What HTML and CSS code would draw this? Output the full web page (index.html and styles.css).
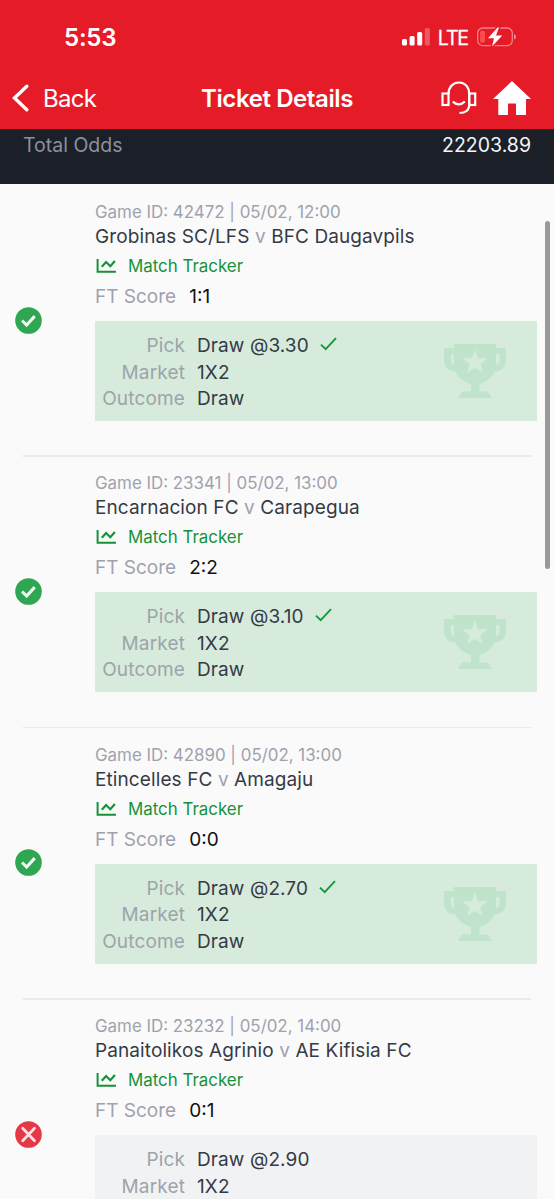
FILE: index.html
```
<!DOCTYPE html>
<html lang="en">
<head>
<meta charset="utf-8">
<title>Ticket Details</title>
<link rel="stylesheet" href="styles.css">
</head>
<body>
<svg class="sprite" width="0" height="0" aria-hidden="true">
  <symbol id="won" viewBox="0 0 26 26"><circle cx="13" cy="13" r="12.8" fill="#2fa651"/><path d="M6.800 13l4.400 4.300L19 8.800" fill="none" stroke="#effaf1" stroke-width="2.9"/></symbol>
  <symbol id="lost" viewBox="0 0 26 26"><circle cx="13" cy="13" r="12.8" fill="#e43847"/><path d="M7.400 7l11.400 12M18.800 7L7.400 19" fill="none" stroke="#fde3e5" stroke-width="2.6" stroke-linecap="round"/></symbol>
  <symbol id="chart" viewBox="0 0 20 14"><path d="M1.100 0v12.700H19.500" fill="none" stroke="#159238" stroke-width="2"/><path d="M5.300 7.800L9.600 3l4.200 4.200L18.400 2" fill="none" stroke="#159238" stroke-width="2.2"/></symbol>
  <symbol id="tick" viewBox="0 0 17 14"><path d="M1 7.600l4.700 4.600L16 1.200" fill="none" stroke="#149a3c" stroke-width="1.9"/></symbol>
  <symbol id="trophy" viewBox="0 0 64 56"><path fill="#c0e4cb" fill-rule="evenodd" d="M11 1H53V5H63V17C63 24 59 28 51.500 28.500C48.500 35 43 39.500 36.500 41V48.500H44.500L49 55H15L19 48.500H28V41C21.500 39.500 15.500 35 12.500 28.500C5 28 1 24 1 17V5H11ZM11 11H8V17C8 20 9 21.500 11 22ZM53 11V22C55.500 21.500 56.500 20 56.500 17V11ZM32 6.500L28.800 15.200H19.200L26.700 21.200L24 30L32 24.800L40 30L37.300 21.200L44.800 15.200H35.200Z"/></symbol>
</svg>
<header class="header">
  <div class="status">
    <span class="time">5:53</span>
    <div class="status-icons">
      <svg width="28" height="18" viewBox="0 0 28 18" fill="#fff"><rect x="0" y="11" width="5" height="6.500" rx="1.500"/><rect x="7.600" y="8" width="5" height="9.500" rx="1.500"/><rect x="15.200" y="4" width="5" height="13.500" rx="1.500"/><rect x="22.800" y="0" width="5" height="17.500" rx="1.500" opacity=".28"/></svg>
      <span class="network">LTE</span>
      <svg class="battery" width="40" height="22" viewBox="0 0 40 22"><rect x=".7" y="2" width="34.600" height="17.600" rx="5" fill="none" stroke="#fff" stroke-opacity=".45" stroke-width="1.300"/><rect x="3" y="4.800" width="5" height="12" rx="2" fill="#ff4b50"/><path d="M37 8v5.600c2.600-1 2.600-4.600 0-5.600z" fill="#f48f96"/><path d="M20.500 1.500L11 12.300h6L15 20.500L25.300 9.500H19L22 1.500z" fill="#fff" stroke="#e61b28" stroke-width="3" stroke-linejoin="round" paint-order="stroke"/></svg>
    </div>
  </div>
  <nav class="nav">
    <div class="back">
      <svg width="17" height="28" viewBox="0 0 17 28"><path d="M14.800 2.200L2.500 14l12.300 11.800" fill="none" stroke="#fff" stroke-width="3.400" stroke-linecap="round"/></svg>
      <span class="back-label">Back</span>
    </div>
    <h1 class="title">Ticket Details</h1>
    <div class="actions">
      <svg width="36" height="34" viewBox="0 0 36 34" fill="none" stroke="#fff" stroke-width="2.200"><rect x="1.500" y="12.500" width="6" height="11.500"/><rect x="28.200" y="12.500" width="6" height="11.500"/><path d="M7.500 13C7.500 6 12 1.500 18 1.500S28.200 6 28.200 13V24C28.200 29 24.500 32 18.500 32"/><path d="M11.800 20.600C15.500 24.200 20.500 24.200 23.800 20.600"/></svg>
      <svg width="38" height="34" viewBox="0 0 38 34" fill="#fff"><path d="M19 0L38 18H33V34H23V22.500H15V34H5.300V18H0z"/></svg>
    </div>
  </nav>
</header>
<section class="odds"><span class="odds-label">Total Odds</span><span class="odds-value">22203.89</span></section>
<main class="list">
  <article class="game">
    <svg class="state"><use href="#won"/></svg>
    <div class="info">
      <div class="meta">Game ID: 42472 | 05/02, 12:00</div>
      <div class="teams">Grobinas SC/LFS <span class="versus">v</span> BFC Daugavpils</div>
      <div class="tracker"><svg class="chart"><use href="#chart"/></svg>Match Tracker</div>
      <div class="score"><span class="label">FT Score</span><span class="result">1:1</span></div>
      <div class="bet bet-won">
        <dl class="rows"><dt>Pick</dt><dd>Draw @3.30<svg class="tick"><use href="#tick"/></svg></dd><dt>Market</dt><dd>1X2</dd><dt>Outcome</dt><dd>Draw</dd></dl>
        <svg class="trophy"><use href="#trophy"/></svg>
      </div>
    </div>
  </article>
  <article class="game">
    <svg class="state"><use href="#won"/></svg>
    <div class="info">
      <div class="meta">Game ID: 23341 | 05/02, 13:00</div>
      <div class="teams">Encarnacion FC <span class="versus">v</span> Carapegua</div>
      <div class="tracker"><svg class="chart"><use href="#chart"/></svg>Match Tracker</div>
      <div class="score"><span class="label">FT Score</span><span class="result">2:2</span></div>
      <div class="bet bet-won">
        <dl class="rows"><dt>Pick</dt><dd>Draw @3.10<svg class="tick"><use href="#tick"/></svg></dd><dt>Market</dt><dd>1X2</dd><dt>Outcome</dt><dd>Draw</dd></dl>
        <svg class="trophy"><use href="#trophy"/></svg>
      </div>
    </div>
  </article>
  <article class="game">
    <svg class="state"><use href="#won"/></svg>
    <div class="info">
      <div class="meta">Game ID: 42890 | 05/02, 13:00</div>
      <div class="teams">Etincelles FC <span class="versus">v</span> Amagaju</div>
      <div class="tracker"><svg class="chart"><use href="#chart"/></svg>Match Tracker</div>
      <div class="score"><span class="label">FT Score</span><span class="result">0:0</span></div>
      <div class="bet bet-won">
        <dl class="rows"><dt>Pick</dt><dd>Draw @2.70<svg class="tick"><use href="#tick"/></svg></dd><dt>Market</dt><dd>1X2</dd><dt>Outcome</dt><dd>Draw</dd></dl>
        <svg class="trophy"><use href="#trophy"/></svg>
      </div>
    </div>
  </article>
  <article class="game game-cut">
    <svg class="state"><use href="#lost"/></svg>
    <div class="info">
      <div class="meta">Game ID: 23232 | 05/02, 14:00</div>
      <div class="teams">Panaitolikos Agrinio <span class="versus">v</span> AE Kifisia FC</div>
      <div class="tracker"><svg class="chart"><use href="#chart"/></svg>Match Tracker</div>
      <div class="score"><span class="label">FT Score</span><span class="result">0:1</span></div>
      <div class="bet">
        <dl class="rows"><dt>Pick</dt><dd>Draw @2.90</dd><dt>Market</dt><dd>1X2</dd></dl>
      </div>
    </div>
  </article>
</main>
<div class="scrollbar"></div>
</body>
</html>
```
FILE: styles.css
```
* { box-sizing: border-box; }
body {
  margin: 0;
  width: 554px;
  height: 1199px;
  overflow: hidden;
  position: relative;
  background: #fafafb;
  color: #353a45;
  font-family: Inter, "Liberation Sans", sans-serif;
  font-size: 19px;
}
svg { display: block; flex: none; }
.sprite { position: absolute; }
.header { height: 129px; background: #e61b28; color: #fff; padding-top: 22px; }
.status { display: flex; justify-content: space-between; align-items: center; height: 30px; padding: 0 37px 0 64px; }
.time { font-size: 24px; font-weight: 600; letter-spacing: -0.2px; }
.status-icons { display: flex; align-items: center; }
.network { font-size: 19.5px; letter-spacing: -1.1px; margin: 1px 9px 0 8px; -webkit-text-stroke: 0.3px; }
.nav { display: grid; grid-template-columns: 1fr auto 1fr; align-items: center; height: 40px; margin-top: 26px; padding: 0 23px 0 12px; }
.back { display: flex; align-items: center; gap: 14px; }
.back-label { font-size: 24px; letter-spacing: -0.7px; }
.title { margin: 0 0 0 11px; font-size: 24px; font-weight: 600; letter-spacing: -0.4px; }
.actions { display: flex; justify-content: flex-end; gap: 16px; }
.odds { display: flex; justify-content: space-between; height: 55px; padding: 3px 23px 0; background: #1b1f28; line-height: 24px; font-size: 19.5px; border-top: 1px solid #33222c; }
.odds-label { color: #8d919b; }
.odds-value { color: #f5f5f6; }
.list { height: 1015px; padding-top: 0.67px; overflow: hidden; }
.game { display: flex; align-items: center; height: 271.33px; padding: 0 17px 0 15px; position: relative; }
.game::after { content: ""; position: absolute; left: 23px; right: 23px; bottom: -1px; height: 1.5px; background: #e8e9ec; }
.game-cut { height: 200px; align-items: flex-start; }
.game-cut .state { margin-top: 122px; }
.game-cut .bet { height: 65px; }
.game-cut::after { display: none; }
.state { width: 27px; height: 27px; margin-right: 53px; }
.info { flex: 1; align-self: flex-start; padding-top: 18.4px; }
.meta { font-size: 16.9px; line-height: 18px; color: #9fa2ac; }
.teams { line-height: 32px; height: 30px; letter-spacing: 0.1px; }
.versus { color: #9fa2ac; }
.tracker { display: flex; align-items: center; gap: 11px; padding-left: 1px; height: 30px; color: #159238; font-size: 16.9px; }
.chart { width: 21px; height: 14px; }
.score { display: flex; gap: 13px; line-height: 31px; height: 30px; }
.label { color: #9fa2ac; }
.result { color: #111; }
.bet { display: flex; justify-content: space-between; height: 100px; margin-top: 10px; padding: 12px 30px 0 6px; background: #f1f2f4; }
.bet-won { background: #d6ebdc; }
.rows { display: grid; grid-template-columns: 84px auto; grid-auto-rows: 26.5px; column-gap: 12px; margin: 0; line-height: 26.5px; }
.rows dt { color: #9da4aa; text-align: right; letter-spacing: 0.15px; }
.rows dd { margin: 0; display: flex; letter-spacing: 0.1px; }
.tick { width: 17px; height: 14px; margin: 4px 0 0 11px; }
.trophy { width: 64px; height: 56px; margin-top: 10px; }
.scrollbar { position: absolute; top: 221px; left: 545px; width: 5px; height: 348px; border-radius: 3px; background: #98999b; }
```
